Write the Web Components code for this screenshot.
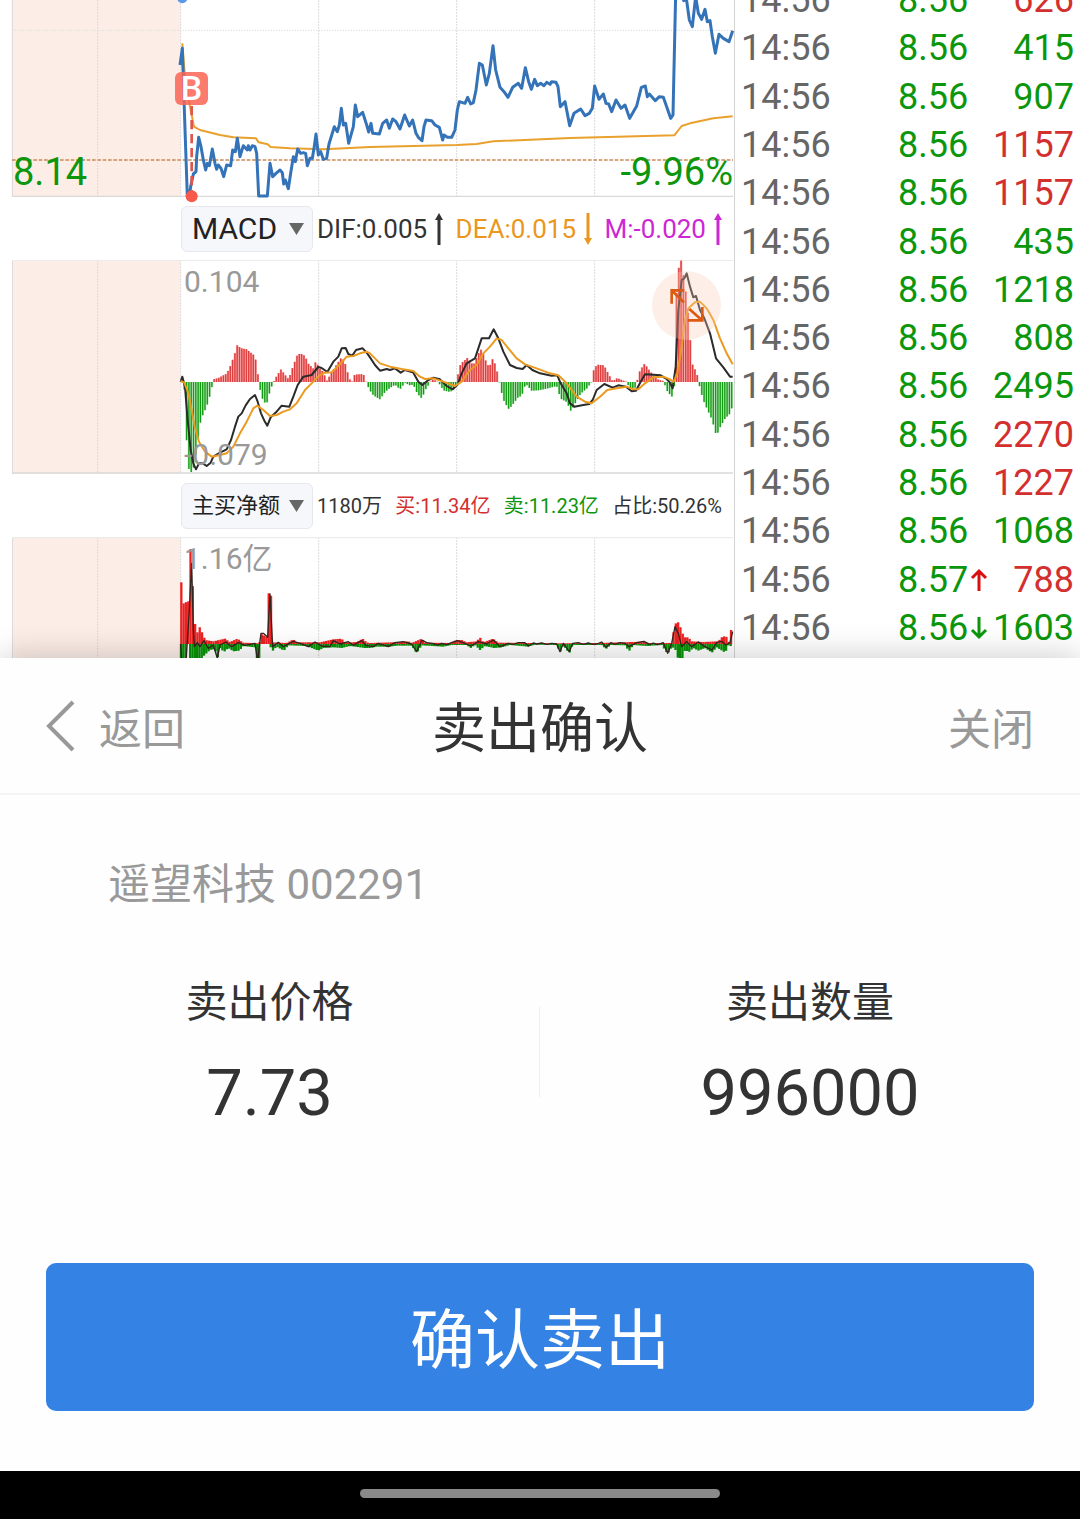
<!DOCTYPE html>
<html lang="zh-CN">

<head>
    <meta charset="UTF-8">
    <meta name="viewport" content="width=device-width, initial-scale=1.0">
    <title>卖出确认</title>
    <style>
        * {
            box-sizing: border-box;
        }

        body {
            margin: 0;
            background: #fff;
            color: #333;
            font-family: Roboto, "Noto Sans CJK SC", sans-serif;
        }
    </style>
</head>

<body>
    <trade-screen>
        <quote-charts slot="charts"></quote-charts>
        <tick-tape slot="tape"></tick-tape>
        <order-sheet slot="sheet" heading="卖出确认">
            <span slot="stock">遥望科技 002291</span>
            <order-figure label="卖出价格">7.73</order-figure>
            <order-figure label="卖出数量">996000</order-figure>
            <span slot="action">确认卖出</span>
        </order-sheet>
    </trade-screen>
</body>
<script>
    const RED = "#d32f2f";
    const GREEN = "#0b960b";

    /** Chart data, in viewBox units: three to a pixel at full width **/

    const shift = (points) => points.map(([x, y]) => [x + 1110, y]);

    const PRICE = [
        [540, 195], [547, 145], [552, 300], [562, 590], [568, 590], [572, 560], [580, 522], [588, 515], [590, 470], [596, 412],
        [603, 440], [610, 480], [617, 510], [622, 490], [628, 497], [637, 447], [645, 490], [650, 508], [655, 495], [663, 505],
        [671, 530], [680, 495], [692, 497], [698, 450], [706, 455], [712, 415], [720, 470], [730, 437], [742, 450], [745, 437],
        [750, 450], [757, 437], [765, 440], [770, 460], [776, 588], [802, 588], [810, 490], [818, 530], [828, 520], [840, 510],
        [847, 518], [851, 552], [856, 540], [865, 566], [872, 520], [880, 470], [886, 485], [893, 447], [902, 460], [910, 458],
        [917, 460], [922, 497], [930, 475], [937, 475], [942, 445], [948, 402], [955, 465], [962, 455], [970, 478], [980, 475],
        [987, 432], [1003, 380], [1012, 395], [1018, 375], [1024, 325], [1030, 375], [1037, 370], [1046, 430], [1060, 380],
        [1066, 315], [1073, 350], [1088, 337], [1100, 375], [1106, 396],
        ...shift([
            [3, 370], [8, 400], [28, 402], [38, 370], [50, 360], [58, 385], [68, 357], [78, 365], [90, 387], [104, 345],
            [118, 378], [128, 360], [138, 400], [145, 412], [156, 422], [162, 380], [168, 360], [185, 362], [195, 375],
            [208, 382], [218, 420], [222, 405], [232, 412], [245, 412], [255, 390], [262, 330], [268, 305], [285, 310],
            [293, 292], [302, 312], [310, 308], [318, 270], [328, 190], [337, 195], [349, 255], [358, 220], [369, 137],
            [377, 210], [390, 262], [402, 275], [414, 292], [428, 262], [445, 250], [455, 265], [466, 203], [476, 245],
            [484, 268], [494, 238], [502, 257], [512, 250], [522, 257], [530, 247], [540, 253], [545, 245], [558, 247],
            [564, 260], [571, 320], [585, 305], [592, 340], [599, 377], [612, 340], [632, 327], [645, 347], [658, 340],
            [667, 325], [674, 258], [687, 298], [700, 282], [708, 310], [716, 312], [725, 335], [738, 300], [753, 325],
            [765, 315], [779, 355], [800, 318], [814, 262], [826, 258], [832, 290], [838, 282], [856, 302], [868, 290],
            [880, 292], [890, 320], [902, 355], [909, 345], [917, -20], [938, -20], [941, 2], [949, -5], [958, 60], [967, 80],
            [977, -10], [985, 40], [995, 58], [1005, 28], [1012, 65], [1020, 62], [1027, 110], [1036, 160], [1047, 103],
            [1060, 115], [1077, 125], [1088, 92]
        ])
    ];

    const AVERAGE = [
        [547, 130], [555, 230], [570, 320], [582, 380], [600, 390], [660, 405], [700, 412], [768, 415], [776, 427],
        [803, 433], [812, 441], [870, 445], [970, 448], [1050, 444],
        ...shift([
            [0, 441], [130, 438], [260, 435], [320, 432], [370, 424], [600, 414], [800, 409], [913, 406], [935, 378],
            [960, 370], [1030, 355], [1088, 349]
        ])
    ];

    const DIF = [
        [542, 396], [547, 380], [555, 410], [562, 500], [572, 600], [580, 640], [588, 658], [597, 640], [608, 640],
        [620, 648], [632, 638], [640, 620], [660, 608], [680, 598], [693, 570], [705, 530], [715, 500], [725, 490],
        [737, 466], [750, 447], [765, 435], [773, 455], [783, 490], [793, 512], [802, 527], [812, 502], [828, 487],
        [845, 467], [868, 470], [880, 440], [893, 405], [910, 380], [935, 375], [955, 351], [965, 354], [982, 366],
        [1000, 335], [1015, 320], [1025, 295], [1037, 294], [1045, 312], [1057, 317], [1068, 300], [1088, 295], [1100, 308],
        ...shift([
            [0, 322], [15, 345], [30, 362], [50, 357], [60, 360], [75, 355], [92, 368], [105, 360], [130, 368], [145, 395],
            [157, 405], [175, 390], [190, 383], [210, 388], [230, 408], [248, 418], [262, 405], [275, 370], [290, 340],
            [315, 325], [325, 295], [335, 265], [357, 265], [371, 238], [385, 265], [400, 305], [420, 345], [440, 354],
            [458, 357], [470, 345], [487, 360], [510, 370], [545, 377], [562, 376], [572, 400], [590, 430], [600, 460],
            [613, 470], [640, 465], [658, 462], [668, 450], [680, 420], [703, 402], [728, 413], [745, 406], [768, 410],
            [785, 424], [798, 422], [812, 395], [825, 373], [850, 374], [872, 376], [887, 385], [898, 395], [908, 415],
            [917, 350], [925, 180], [935, 90], [943, 85], [950, 70], [960, 110], [970, 142], [978, 138], [990, 180],
            [1003, 205], [1020, 250], [1038, 325], [1060, 352], [1080, 380], [1088, 380]
        ])
    ];

    const DEA = [
        [542, 393], [553, 398], [565, 430], [575, 480], [585, 535], [597, 575], [615, 605], [635, 620], [660, 615],
        [680, 610], [700, 590], [720, 550], [740, 515], [760, 475], [772, 467], [790, 480], [810, 498], [830, 495],
        [850, 485], [870, 478], [890, 460], [915, 420], [940, 395], [960, 375], [975, 368], [995, 367], [1020, 343],
        [1040, 320], [1060, 318], [1080, 310], [1100, 305],
        ...shift([
            [0, 310], [30, 340], [60, 350], [95, 357], [130, 363], [150, 380], [165, 387], [190, 385], [220, 395],
            [255, 408], [275, 395], [300, 360], [320, 345], [340, 310], [360, 290], [380, 265], [395, 270], [415, 295],
            [440, 325], [465, 343], [500, 355], [540, 370], [565, 376], [590, 400], [620, 440], [645, 455], [665, 460],
            [690, 440], [712, 420], [740, 415], [770, 410], [790, 418], [805, 418], [825, 400], [850, 382], [880, 380],
            [900, 388], [910, 396], [922, 370], [932, 310], [945, 210], [955, 175], [975, 157], [990, 155], [1010, 175],
            [1030, 210], [1050, 265], [1070, 310], [1088, 343]
        ])
    ];

    // [x, height], positive above the zero line
    const MACD = [
        [545, 15], [552, 0], [558, -150], [566, -260], [575, -272], [583, -250], [590, -200], [597, -150], [603, -110],
        [612, -92], [625, -60], [637, -10], [641, 8], [655, 12], [670, 20], [680, 25], [692, 50], [706, 90], [713, 115],
        [720, 102], [740, 98], [760, 82], [770, 60], [776, 0], [783, -36], [790, -58], [800, -66], [812, -20], [820, -3],
        [824, 8], [843, 38], [853, 24], [866, 8], [880, 50], [893, 84], [905, 84], [915, 78], [925, 55], [940, 40],
        [948, 64], [957, 42], [970, 30], [980, 3], [990, 20], [1005, 45], [1025, 75], [1038, 50], [1046, 15], [1055, -3],
        [1064, 22], [1090, 24], [1100, -5],
        ...shift([
            [0, -26], [10, -40], [30, -52], [45, -30], [60, -18], [75, -8], [90, -22], [105, -2], [118, -10], [130, -8],
            [142, -35], [156, -50], [165, -25], [178, -5], [185, 8], [200, 3], [210, -8], [220, -25], [240, -30],
            [255, -20], [262, 15], [272, 55], [292, 72], [310, 50], [325, 85], [335, 100], [350, 55], [358, 45], [369, 72],
            [378, 45], [387, 8], [390, -15], [403, -60], [417, -82], [430, -65], [445, -45], [455, -42], [467, -5],
            [485, -26], [505, -25], [530, -20], [560, -12], [572, -50], [590, -60], [603, -88], [615, -65], [632, -35],
            [650, -20], [665, 0], [672, 40], [682, 52], [702, 50], [715, 25], [728, 2], [742, 12], [760, 4], [772, 0],
            [777, -18], [795, -18], [800, -2], [810, 35], [824, 55], [838, 35], [850, 20], [862, 8], [880, 3], [893, -30],
            [907, -45], [914, -5], [917, 240], [928, 360], [936, 366], [943, 290], [950, 258], [957, 170], [964, 90],
            [970, 30], [977, 42], [985, 5], [990, -20], [1000, -55], [1013, -85], [1027, -115], [1034, -145], [1040, -162],
            [1048, -140], [1065, -110], [1080, -95], [1088, -70]
        ])
    ];

    const BUYS = [
        [543, 185], [550, 185], [551, 115], [557, 115], [558, 128], [565, 128], [566, 105], [570, 110], [571, 285],
        [578, 285], [579, 62], [586, 60], [590, 30], [600, 52], [608, 30], [616, 12], [640, 8], [675, 16], [690, 6],
        [712, 16], [730, 4], [778, 2], [783, 30], [795, 24], [804, 20], [806, 152], [813, 152], [815, 5], [860, 3],
        [880, 14], [890, 5], [960, 5], [1000, 14], [1025, 16], [1035, 4], [1070, 6], [1088, 16], [1100, 5],
        ...shift([
            [0, 3], [100, 6], [115, 8], [125, 3], [155, 16], [165, 4], [240, 3], [260, 12], [275, 12], [290, 5], [320, 8],
            [330, 20], [340, 5], [369, 16], [385, 4], [560, 2], [690, 3], [820, 7], [835, 3], [907, 3], [912, 48],
            [920, 68], [926, 64], [933, 46], [942, 20], [955, 20], [965, 8], [1000, 6], [1045, 8], [1055, 20], [1068, 25],
            [1075, 5], [1079, 10], [1083, 42], [1090, 42]
        ])
    ];

    const SELLS = [
        [542, -60], [561, -60], [562, 0], [569, 0], [571, -60], [584, -60], [587, -30], [592, -45], [603, -60],
        [612, -35], [630, -18], [645, -15], [652, -45], [660, -12], [672, -24], [685, -12], [700, -22], [718, -20],
        [730, -6], [765, -10], [768, -60], [780, -60], [784, 0], [808, 0], [817, -22], [830, -8], [852, -20], [865, -4],
        [920, -6], [955, -20], [970, -12], [1000, -10], [1025, -12], [1050, -6], [1095, -12],
        ...shift([
            [0, -12], [20, -8], [60, -8], [80, -5], [125, -5], [140, -28], [155, -4], [220, -8], [245, -3], [290, -3],
            [302, -12], [315, -3], [330, -18], [345, -6], [372, -12], [395, -10], [420, -3], [475, -8], [495, -2],
            [560, -3], [570, -26], [580, -4], [598, -28], [608, -3], [695, -3], [708, -15], [722, -3], [765, -4],
            [777, -22], [790, -3], [830, -6], [875, -3], [893, -30], [905, -10], [915, -12], [922, -40], [935, -50],
            [945, -18], [957, -24], [970, -12], [985, -20], [1005, -12], [1026, -26], [1040, -10], [1066, -26],
            [1075, -4], [1088, -8]
        ])
    ];

    const NET = [
        [542, 522], [545, 575], [558, 575], [568, 420], [575, 280], [580, 480], [583, 530], [592, 518], [600, 530],
        [612, 512], [625, 535], [640, 525], [652, 565], [660, 525], [678, 516], [695, 530], [715, 518], [735, 526],
        [765, 520], [773, 575], [779, 520], [783, 490], [790, 490], [803, 502], [810, 372], [818, 530], [835, 517],
        [850, 530], [880, 514], [900, 520], [925, 530], [945, 516], [965, 528], [990, 530], [1000, 512], [1020, 522],
        [1045, 515], [1060, 526], [1085, 512], [1098, 526],
        ...shift([
            [10, 530], [25, 520], [55, 530], [75, 518], [100, 515], [125, 522], [140, 545], [156, 510], [170, 518],
            [190, 521], [205, 525], [215, 520], [230, 524], [245, 518], [262, 512], [285, 520], [302, 528], [325, 515],
            [350, 522], [370, 510], [390, 530], [405, 524], [415, 520], [430, 523], [445, 518], [465, 518], [475, 528],
            [490, 519], [500, 522], [515, 519], [530, 523], [545, 520], [560, 522], [570, 545], [580, 520], [598, 545],
            [608, 520], [625, 518], [640, 523], [655, 519], [668, 523], [680, 522], [695, 516], [708, 532], [722, 518],
            [735, 523], [750, 518], [765, 520], [777, 530], [800, 518], [822, 514], [840, 524], [850, 519], [862, 524],
            [880, 518], [893, 550], [905, 520], [915, 470], [925, 490], [935, 530], [950, 515], [965, 530], [985, 516],
            [1005, 530], [1026, 540], [1040, 518], [1055, 514], [1068, 525], [1080, 518], [1088, 485]
        ])
    ];

    const STEP = 6.9;

    const line = (points, color, width) =>
        `<polyline points="${points.join(" ")}" fill="none" stroke="${color}" stroke-width="${width}" stroke-linejoin="round" />`;

    // one bar a minute, read off the outline in `points`
    const bars = (points, zero, width, up, down) => {
        let out = "";
        for (let x = points[0][0] + 1; x <= 2198; x += STEP) {
            let i = points.findIndex(([px]) => px > x);
            if (i < 1) break;
            let [x0, h0] = points[i - 1];
            let [x1, h1] = points[i];
            let h = h0 + ((h1 - h0) * (x - x0)) / (x1 - x0);
            let y = h > 0 ? zero - h : zero;
            out += `<rect x="${(x - width / 2).toFixed(1)}" y="${y.toFixed(1)}" width="${width}" height="${Math.abs(h).toFixed(1)}" fill="${h > 0 ? up : down}" />`;
        }
        return out;
    };

    const grid = (top, height) => `
      <rect x="36" y="${top}" width="506" height="${height}" fill="#fcede6" />
      ${[293, 542, 956, 1370, 1784].map((x) =>
        `<line x1="${x}" x2="${x}" y1="${top}" y2="${top + height}" stroke="#dcdcdc" stroke-width="3" stroke-dasharray="6 3" />`).join("")}
      <line x1="37" x2="37" y1="${top}" y2="${top + height}" stroke="#d8d8d8" stroke-width="3" />`;

    const rule = (y, color = "#d9d9d9") =>
        `<line x1="36" x2="2199" y1="${y}" y2="${y}" stroke="${color}" stroke-width="4" />`;

    class TradeScreen extends HTMLElement {
        constructor() {
            super();
            this.attachShadow({ mode: "open" }).innerHTML = `
      <style>
        :host {
          display: flex;
          flex-direction: column;
          min-height: 100vh;
        }
        main {
          display: grid;
          grid-template-columns: minmax(0, 49fr) minmax(0, 23fr);
        }
        ::slotted([slot="sheet"]) {
          flex: 1;
        }
        footer {
          display: flex;
          justify-content: center;
          padding: 18px 0 21px;
          background: #000;
        }
        i {
          width: calc(100% / 3);
          height: 9px;
          border-radius: 5px;
          background: #8a8a8a;
        }
      </style>
      <main>
        <slot name="charts"></slot>
        <slot name="tape"></slot>
      </main>
      <slot name="sheet"></slot>
      <footer><i></i></footer>
    `;
        }
    }

    class ChartPane extends HTMLElement {
        constructor() {
            super();
            this.attachShadow({ mode: "open" });
        }

        connectedCallback() {
            let kind = this.getAttribute("kind");
            let [top, height] = { price: [0, 591], macd: [30, 642], net: [201, 363] }[kind];
            this.shadowRoot.innerHTML = `
      <style>
        :host {
          display: block;
          position: relative;
          height: ${height / 3}px;
        }
        svg {
          display: block;
          width: 100%;
          height: 100%;
        }
        :host([kind="price"]) svg {
          overflow: visible;
        }
      </style>
      <svg viewBox="36 ${top} 2166 ${height}" preserveAspectRatio="none" aria-hidden="true">
        ${grid(top, height)}
        ${this[kind]()}
      </svg>
      <slot></slot>
    `;
        }

        price() {
            return `
        <line x1="36" x2="2199" y1="91" y2="91" stroke="#ddd" stroke-width="3" stroke-dasharray="4 4" />
        ${rule(589)}
        <line x1="36" x2="2199" y1="480" y2="480" stroke="#c68a58" stroke-width="4" stroke-dasharray="11 5" />
        <circle cx="547" cy="-5" r="15" fill="#5b97ea" />
        ${line(AVERAGE, "#e9a02c", 6)}
        ${line(PRICE, "#3473b8", 9)}
        <line x1="575" x2="575" y1="318" y2="575" stroke="#e0564b" stroke-width="8" stroke-dasharray="28 14" />
        <circle cx="575" cy="589" r="18" fill="#f75a4b" />`;
        }

        macd() {
            return `
        ${rule(31, "#ececec")}
        ${rule(669)}
        ${bars(MACD, 396, 7, "#fb9a9a", "#b4e6b4")}
        ${bars(MACD, 396, 4, "#dc3f3f", "#129a12")}
        ${line(DIF, "#2b2b2b", 6)}
        ${line(DEA, "#eb9a20", 6)}`;
        }

        net() {
            return `
        ${rule(203, "#ececec")}
        ${bars(BUYS, 522, 7, "#ec2222", "#ec2222")}
        ${bars(SELLS, 522, 7, "#079207", "#079207")}
        ${line(NET, "#33261f", 4)}`;
        }
    }

    class IndicatorBar extends HTMLElement {
        constructor() {
            super();
            this.attachShadow({ mode: "open" }).innerHTML = `
      <style>
        :host {
          display: flex;
          align-items: center;
          height: 63px;
          padding: 0 12px 0 169px;
          gap: 4px;
          font-size: 26px;
          line-height: 32px;
          white-space: nowrap;
        }
        :host([compact]) {
          font-size: 20px;
        }
        label {
          position: relative;
          flex: none;
        }
        select {
          appearance: none;
          display: block;
          width: 132px;
          height: 46px;
          margin: 0;
          padding: 0 10px;
          border: 1px solid #e6e8ee;
          border-radius: 6px;
          background: #f6f7fa;
          color: #222;
          font-family: inherit;
          font-size: 30px;
        }
        :host([compact]) select {
          font-size: 22px;
        }
        label svg {
          position: absolute;
          right: 9px;
          top: 17px;
          pointer-events: none;
        }
        div {
          flex: 1;
          display: flex;
          justify-content: space-between;
        }
      </style>
      <label>
        <select></select>
        <svg width="15" height="12" viewBox="0 0 15 12" aria-hidden="true"><path d="M0 0h15L7.500 12z" fill="#666" /></svg>
      </label>
      <div><slot></slot></div>
    `;
        }

        connectedCallback() {
            let select = this.shadowRoot.querySelector("select");
            select.add(new Option(this.getAttribute("name")));
            select.setAttribute("aria-label", this.getAttribute("name"));
        }
    }

    class TrendValue extends HTMLElement {
        constructor() {
            super();
            this.attachShadow({ mode: "open" });
        }

        connectedCallback() {
            let turn = this.getAttribute("trend") === "down" ? "rotate(180 4 16)" : "";
            this.shadowRoot.innerHTML = `
      <style>
        :host {
          display: flex;
          align-items: center;
          gap: 8px;
        }
      </style>
      <slot></slot>
      <svg width="8" height="32" viewBox="0 0 8 32" fill="currentColor" aria-hidden="true">
        <path d="M4 0l4 7H5.500V32H2.500V7H0z" transform="${turn}" />
      </svg>
    `;
        }
    }

    class QuoteCharts extends HTMLElement {
        constructor() {
            super();
            this.attachShadow({ mode: "open" }).innerHTML = `
      <style>
        :host {
          display: block;
          box-sizing: border-box;
          padding-left: 12px;
          border-right: 1px solid #d4d4d4;
        }
        .over {
          position: absolute;
          font-size: 30px;
          line-height: 36px;
          color: #999;
        }
        .limit {
          bottom: 7px;
          font-size: 38px;
          color: ${GREEN};
        }
        .low { left: 1px; }
        .pct { right: 1px; }
        .scale { left: 172px; }
        .top { top: 4px; }
        .bottom { bottom: 1px; }
        .buy {
          left: 163px;
          top: 72px;
          width: 33px;
          border-radius: 6px;
          background: rgba(250, 100, 85, .85);
          color: #fff;
          font-size: 34px;
          font-weight: 500;
          line-height: 33px;
          text-align: center;
        }
        button {
          position: absolute;
          right: 13px;
          top: 11px;
          width: 69px;
          height: 69px;
          padding: 0;
          border: 0;
          border-radius: 50%;
          background: rgba(250, 205, 180, .32);
        }
        button svg {
          display: block;
        }
        .buys { color: ${RED}; }
        .sells { color: ${GREEN}; }
        .dea { color: #ea9720; }
        .m { color: #cd27d3; }
      </style>
      <chart-pane kind="price">
        <span class="over buy">B</span>
        <span class="over limit low">8.14</span>
        <span class="over limit pct">-9.96%</span>
      </chart-pane>
      <indicator-bar name="MACD">
        <trend-value trend="up">DIF:0.005</trend-value>
        <trend-value class="dea" trend="down">DEA:0.015</trend-value>
        <trend-value class="m" trend="up">M:-0.020</trend-value>
      </indicator-bar>
      <chart-pane kind="macd">
        <span class="over scale top">0.104</span>
        <span class="over scale bottom">-0.079</span>
        <button type="button" aria-label="放大">
          <svg width="69" height="69" viewBox="846 64 207 207" fill="none" stroke="#dc5a12" stroke-width="8" aria-hidden="true">
            <path d="M943 122H905V162M907 124L942 158M997 172V212H953M958 178L995 211" />
          </svg>
        </button>
      </chart-pane>
      <indicator-bar name="主买净额" compact>
        <span>1180万</span>
        <span class="buys">买:11.34亿</span>
        <span class="sells">卖:11.23亿</span>
        <span>占比:50.26%</span>
      </indicator-bar>
      <chart-pane kind="net">
        <span class="over scale top">1.16亿</span>
      </chart-pane>
    `;
        }
    }

    class TickTape extends HTMLElement {
        ticks = [
            ["8.56", 626, RED],
            ["8.56", 415, GREEN],
            ["8.56", 907, GREEN],
            ["8.56", 1157, RED],
            ["8.56", 1157, RED],
            ["8.56", 435, GREEN],
            ["8.56", 1218, GREEN],
            ["8.56", 808, GREEN],
            ["8.56", 2495, GREEN],
            ["8.56", 2270, RED],
            ["8.56", 1227, RED],
            ["8.56", 1068, GREEN],
            ["8.57", 788, RED, "up"],
            ["8.56", 1603, GREEN, "down"]
        ];

        constructor() {
            super();
            this.attachShadow({ mode: "open" });
        }

        connectedCallback() {
            this.shadowRoot.innerHTML = `
      <style>
        :host {
          display: block;
          box-sizing: border-box;
          overflow: hidden;
          padding: 0 6px;
        }
        table {
          width: 100%;
          height: calc(100% + 18px);
          margin-top: -24px;
          border-collapse: collapse;
          font-size: 36px;
          line-height: 42px;
          color: #666;
        }
        td {
          padding: 0;
          white-space: nowrap;
        }
        td:nth-child(2) {
          width: 95px;
          color: ${GREEN};
        }
        td:nth-child(3) {
          width: 80px;
          text-align: right;
        }
      </style>
      <table aria-label="成交明细">
        ${this.ticks.map(([price, volume, color, move]) => `<tr>
          <td>14:56</td>
          <td>${price}${move ? this.arrow(move) : ""}</td>
          <td style="color: ${color}">${volume}</td>
        </tr>`).join("")}
      </table>
    `;
        }

        arrow(move) {
            let d = move === "up" ? "M11 23V3M4 10L11 3L18 10" : "M11 1V21M4 14L11 21L18 14";
            return `<svg width="20" height="24" viewBox="0 0 20 24" fill="none" stroke="${move === "up" ? "#d81010" : GREEN}" stroke-width="3" aria-hidden="true"><path d="${d}" /></svg>`;
        }
    }

    class OrderSheet extends HTMLElement {
        constructor() {
            super();
            this.attachShadow({ mode: "open" }).innerHTML = `
      <style>
        :host {
          display: flex;
          flex-direction: column;
          position: relative;
          background: #fefefe;
          box-shadow: 0 0 32px rgba(0, 0, 0, .22);
          clip-path: inset(-40px 0 0);
        }
        header {
          display: grid;
          grid-template-columns: 1fr auto 1fr;
          align-items: center;
          height: 137px;
          padding: 0 46px;
          border-bottom: 2px solid #f4f4f4;
          box-sizing: border-box;
        }
        h1 {
          margin: 0;
          padding-top: 8px;
          font-size: 54px;
          font-weight: 400;
          line-height: 64px;
        }
        button {
          margin: 0;
          padding: 0;
          border: 0;
          background: none;
          color: #999;
          font: inherit;
          font-size: 43px;
          line-height: 64px;
        }
        .back {
          display: flex;
          align-items: center;
          justify-self: start;
          gap: 24px;
        }
        .back span {
          padding-top: 8px;
        }
        .close {
          justify-self: end;
          padding-top: 8px;
        }
        p {
          margin: 58px 10% 0;
          color: #999;
          font-size: 42px;
          line-height: 64px;
        }
        section {
          display: flex;
          align-items: center;
          margin-top: 54px;
        }
        .submit {
          margin: auto 46px 60px;
          height: 148px;
          padding-top: 8px;
          border-radius: 10px;
          background: #3482e4;
          color: #fff;
          font-size: 65px;
        }
      </style>
      <header>
        <button class="back" type="button">
          <svg width="29" height="52" viewBox="0 0 29 52" fill="none" stroke="currentColor" stroke-width="4" aria-hidden="true"><path d="M27 2L3 26L27 50" /></svg>
          <span>返回</span>
        </button>
        <h1></h1>
        <button class="close" type="button">关闭</button>
      </header>
      <p><slot name="stock"></slot></p>
      <section><slot></slot></section>
      <button class="submit" type="button"><slot name="action"></slot></button>
    `;
        }

        connectedCallback() {
            this.shadowRoot.querySelector("h1").textContent = this.getAttribute("heading");
        }
    }

    class OrderFigure extends HTMLElement {
        constructor() {
            super();
            this.attachShadow({ mode: "open" });
        }

        connectedCallback() {
            this.shadowRoot.innerHTML = `
      <style>
        :host {
          flex: 1;
          display: flex;
          align-items: center;
        }
        :host(:first-of-type)::after {
          content: "";
          width: 1px;
          height: 90px;
          background: #eee;
        }
        dl {
          flex: 1;
          margin: 0;
          text-align: center;
        }
        dt {
          font-size: 42px;
          line-height: 64px;
        }
        dd {
          margin: 18px 0 0;
          font-size: 65px;
          line-height: 80px;
        }
      </style>
      <dl>
        <dt>${this.getAttribute("label")}</dt>
        <dd><slot></slot></dd>
      </dl>
    `;
        }
    }

    customElements.define("chart-pane", ChartPane);
    customElements.define("trend-value", TrendValue);
    customElements.define("indicator-bar", IndicatorBar);
    customElements.define("quote-charts", QuoteCharts);
    customElements.define("tick-tape", TickTape);
    customElements.define("order-figure", OrderFigure);
    customElements.define("order-sheet", OrderSheet);
    customElements.define("trade-screen", TradeScreen);
</script>

</html>
